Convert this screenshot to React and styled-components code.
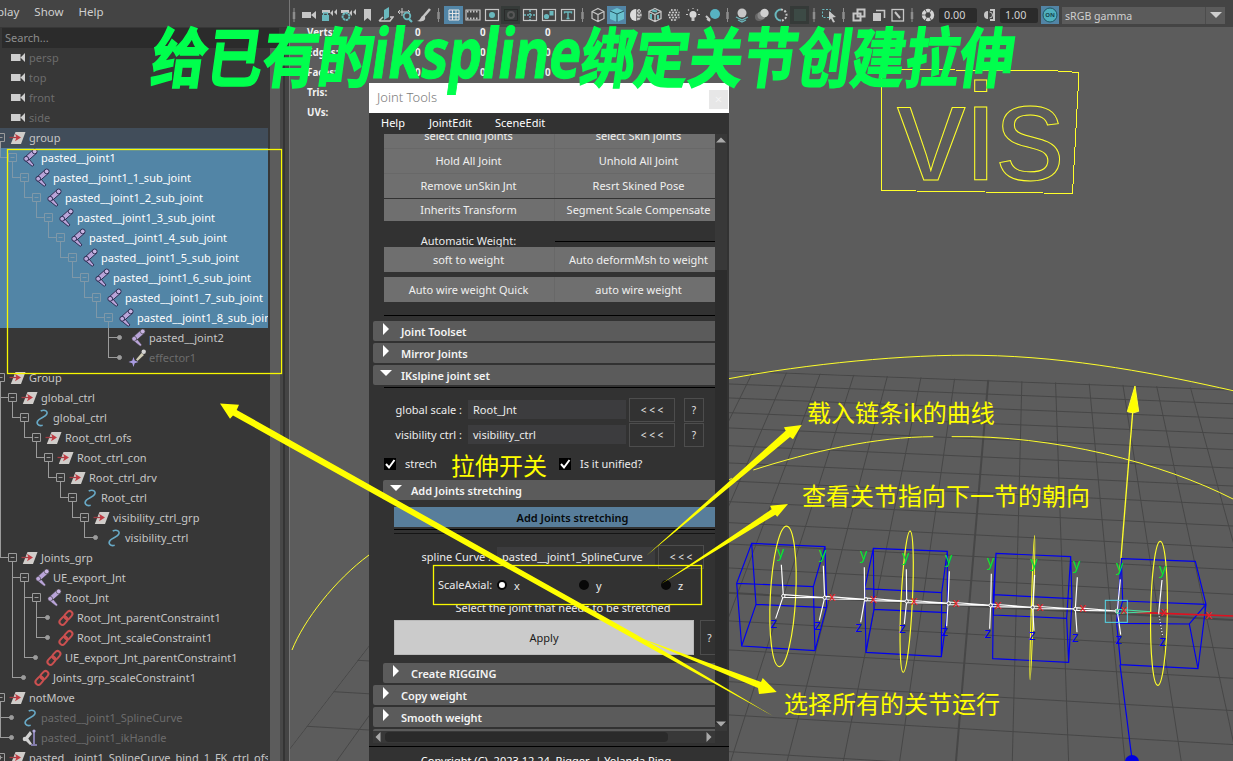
import React from 'react';
import styled, { createGlobalStyle } from 'styled-components';

const UI = '"Noto Sans", "Noto Sans CJK SC", sans-serif';
const CJK = '"Noto Sans CJK SC", "Noto Sans", sans-serif';

const Global = createGlobalStyle`
  * { box-sizing: border-box; }
  body { margin: 0; background: #373737; overflow: hidden; }
`;

const Screen = styled.main`
  position: relative;
  display: grid;
  grid-template-columns: 290px 943px;
  width: 1233px;
  height: 761px;
  overflow: hidden;
  font-family: ${UI};
  font-size: 11px;
  color: #c8c8c8;
`;

/* ---------- outliner ---------- */
const Outliner = styled.aside`
  display: flex;
  flex-direction: column;
  height: 761px;
  background: #373737;
  border-right: 1px solid #767676;
  overflow: hidden;
`;
const OutlinerMenu = styled.nav`
  display: flex;
  flex: none;
  height: 27px;
  margin-left: -3px;
  background: #444;
  line-height: 24px;
  gap: 15px;
  font-size: 11.5px;
  color: #cfcfcf;
`;
const SearchBar = styled.div`
  flex: none;
  height: 20px;
  margin: 1px 10px 0 2px;
  padding-left: 3px;
  background: #2b2b2b;
  line-height: 20px;
  color: #8d8d8d;
  font-size: 11px;
`;
const TreeArea = styled.div`
  display: flex;
  flex: 1;
`;
const Tree = styled.div`
  width: 268px;
  margin-right: 2px;
  overflow: hidden;
`;
const TreeScroll = styled.div`
  width: 10px;
  background: #5c5c5c;
`;
const PanelEdge = styled.div`
  flex: 1;
  background: linear-gradient(90deg, #474747 0 3px, #343434 3px 5px, #444 5px);
`;
const Row = styled.div`
  display: flex;
  height: 20px;
  line-height: 20px;
  white-space: nowrap;
  background: ${(p) => ({ sel: '#5285a6', parent: '#414d5a' }[p.$state] || 'transparent')};
  color: ${(p) => (p.$dim ? '#6c6c6c' : p.$state === 'sel' ? '#fff' : '#c6c6c6')};
  svg { flex: none; }
`;
const RowText = styled.span`
  margin-left: 2px;
  letter-spacing: 0.03px;
`;

const rows = [
  [0, 'persp', 'cam', 'dim'], [0, 'top', 'cam', 'dim'], [0, 'front', 'cam', 'dim'], [0, 'side', 'cam', 'dim'],
  [0, 'group', 'xf', 'parent'],
  [1, 'pasted__joint1', 'joint', 'sel'],
  [2, 'pasted__joint1_1_sub_joint', 'joint', 'sel'],
  [3, 'pasted__joint1_2_sub_joint', 'joint', 'sel'],
  [4, 'pasted__joint1_3_sub_joint', 'joint', 'sel'],
  [5, 'pasted__joint1_4_sub_joint', 'joint', 'sel'],
  [6, 'pasted__joint1_5_sub_joint', 'joint', 'sel'],
  [7, 'pasted__joint1_6_sub_joint', 'joint', 'sel'],
  [8, 'pasted__joint1_7_sub_joint', 'joint', 'sel'],
  [9, 'pasted__joint1_8_sub_joint', 'joint', 'sel'],
  [10, 'pasted__joint2', 'joint'],
  [10, 'effector1', 'eff', 'dim'],
  [0, 'Group', 'xf'], [1, 'global_ctrl', 'xf'], [2, 'global_ctrl', 'curve'],
  [3, 'Root_ctrl_ofs', 'xf'], [4, 'Root_ctrl_con', 'xf'], [5, 'Root_ctrl_drv', 'xf'],
  [6, 'Root_ctrl', 'curve'], [7, 'visibility_ctrl_grp', 'xf'], [8, 'visibility_ctrl', 'curve'],
  [1, 'Joints_grp', 'xf'], [2, 'UE_export_Jnt', 'joint'], [3, 'Root_Jnt', 'joint'],
  [4, 'Root_Jnt_parentConstraint1', 'link'], [4, 'Root_Jnt_scaleConstraint1', 'link'],
  [3, 'UE_export_Jnt_parentConstraint1', 'link'], [2, 'Joints_grp_scaleConstraint1', 'link'],
  [0, 'notMove', 'xf'], [1, 'pasted__joint1_SplineCurve', 'curve', 'dim'], [1, 'pasted__joint1_ikHandle', 'ik', 'dim'],
  [0, 'pasted__joint1_SplineCurve_bind_1_FK_ctrl_ofs', 'xf', 'plus'],
];

function hasLaterSibling(i, level) {
  for (let j = i + 1; j < rows.length; j++) {
    if (rows[j][0] < level) return false;
    if (rows[j][0] === level) return true;
  }
  return false;
}

function Branches({ index }) {
  const [d, , icon, state] = rows[index];
  const x = (l) => 12 * l + 0.5;
  const line = state === 'sel' ? '#7f98a8' : '#9b9b9b';
  const hasKids = index + 1 < rows.length && rows[index + 1][0] > d;
  const box = hasKids || state === 'plus';
  const paths = [];
  for (let l = 1; l < d; l++) if (hasLaterSibling(index, l)) paths.push(`M${x(l - 1)} 0V20`);
  if (d > 0) {
    paths.push(`M${x(d - 1)} 0V${hasLaterSibling(index, d) ? 20 : 10}`);
    paths.push(`M${x(d - 1)} 9.5H${box ? x(d) - 4 : x(d) - 2}`);
  }
  if (hasKids) paths.push(`M${x(d)} 14V20`);
  return (
    <svg width={10 + 12 * d} height="20" fill="none" stroke={line}>
      <path d={paths.join('')} />
      {box && <path d={`M${x(d) - 4} 5.5h8v8h-8zM${x(d) - 2} 9.5h4`} />}
      {state === 'plus' && <path d={`M${x(d)} 7.5v4`} />}
      {!box && d > 0 && icon !== 'cam' && <circle cx={x(d) - 1} cy="9.5" r="2" fill={line} />}
    </svg>
  );
}

function NodeIcon({ kind, selected }) {
  const edge = selected ? '#2f2f55' : '#373737';
  return (
    <svg width="17" height="20" viewBox="0 0 17 20" fill="none" overflow="visible">
      {kind === 'cam' && <path fill="#cdcdcd" d="M1 6h9.500v7H1zM10.500 9.500L15 5v9z" />}
      {kind === 'xf' && (
        <>
          <path fill="#d0cdca" d="M5.500 4H15.500L11 16H.8z" />
          <path d="M-.5 9.500H8" stroke="#a33e44" strokeWidth="1.300" />
          <path fill="#c23a42" d="M5 5.800L11 9.500 5 13.200 6.500 9.500z" />
        </>
      )}
      {kind === 'joint' && (
        <g stroke={edge} strokeWidth={selected ? 1 : 0.6}>
          <path fill="#b9a4d8" d="M10.200 2.600L15 4.800 6.800 12 2.800 9.200zM3 12.500l4-1.500 5 6-1.800 1.300z" />
          <circle cx="12.700" cy="3.400" r="2.400" fill="#c9b4e2" />
          <circle cx="4.200" cy="10.800" r="2.400" fill="#bfa9dc" />
        </g>
      )}
      {kind === 'eff' && (
        <>
          <path fill="#cfcbb4" d="M11.500 5l2.500 2L7.500 13l-1.500-1.500z" />
          <circle cx="13.700" cy="3.800" r="2.200" fill="#d5d5d5" />
          <path fill="#a99be0" d="M3.500 9l1.200 3.600L8.500 14l-3.800 1.300L3.500 19l-1.200-3.700L-1.500 14l3.800-1.400z" />
        </>
      )}
      {kind === 'curve' && <path d="M6.700 3C11 1 14.500 3.500 12.500 6.500C11 9 7 9.500 4.500 12C1.500 15 4 18.500 8.700 17.300" stroke="#68a9c6" strokeWidth="1.600" />}
      {kind === 'link' && (
        <g stroke="#cb5050" strokeWidth="2" transform="rotate(-48 8 10)">
          <rect x="-.2" y="7" width="9" height="5.800" rx="2.900" />
          <rect x="7.200" y="7" width="9" height="5.800" rx="2.900" />
        </g>
      )}
      {kind === 'ik' && (
        <>
          <path fill="#d2d2d2" d="M8 3l2 3-5 6-2.500-2zM3 12l3-2 4 6-2 1z" />
          <circle cx="3" cy="11" r="2.300" fill="#d2d2d2" />
          <path d="M12 3v13M9 17h6" stroke="#9c92cf" strokeWidth="1.600" />
          <circle cx="12" cy="3" r="1.600" fill="#b4abdd" />
        </>
      )}
    </svg>
  );
}

/* ---------- viewport ---------- */
const Viewport = styled.section`
  display: flex;
  flex-direction: column;
  height: 761px;
  background: #5c5c5c;
`;
const Toolbar = styled.div`
  display: flex;
  align-items: center;
  flex: none;
  height: 27px;
  padding-top: 3px;
  background: #444;
`;
const Tool = styled.span`
  display: flex;
  align-items: center;
  justify-content: center;
  flex: none;
  width: ${(p) => p.$w}px;
  height: 18px;
  background: ${(p) => ({ on: '#5285a6', dark: '#353a38' }[p.$mode] || 'transparent')};
`;
const NumberBox = styled.span`
  width: 38px;
  height: 15px;
  margin: 0 1px;
  padding-left: 5px;
  border-radius: 2px;
  background: #2b2b2b;
  color: #d2d2d2;
  line-height: 14px;
  font-size: 10.8px;
`;
const OnButton = styled.span`
  display: flex;
  width: 18px;
  height: 18px;
  margin: 0 3px 0 2px;
  background: #5285a6;
`;
const ColorSpace = styled.span`
  display: flex;
  justify-content: space-between;
  width: 163px;
  height: 17px;
  padding-left: 3px;
  background: #5b5b5b;
  color: #cfcfcf;
  line-height: 18px;
  font-size: 10.600px;
`;
const DropArrow = styled.span`
  display: flex;
  align-items: center;
  justify-content: center;
  width: 20px;
  border-left: 1px solid #4c4c4c;
`;
const Stage = styled.div`
  position: relative;
  flex: 1;
`;
const Hud = styled.div`
  position: absolute;
  left: 17px;
  top: -4px;
  display: grid;
  grid-template-columns: 108px 65px 65px 20px;
  grid-auto-rows: 20px;
  line-height: 20px;
  font-size: 9.8px;
  font-weight: 700;
  color: #f2f2f2;
`;
const SceneSvg = styled.svg`
  display: block;
`;

const G = '#c6c6c6';
const T = '#69b8bd';
const icons = {
  sep: <path d="M8 1v14" stroke="#8d8d8d" strokeWidth="1" />,
  cam: <path fill={G} d="M1 5h9v6H1zM10 8l5-4v8l-5-4z" />,
  camlock: <><path fill={G} d="M1 3h8v3H1zM9 6l3-3v6zM13 5l3-3v6z" /><rect x="1" y="8" width="7" height="6" fill={T} /><path d="M2.500 8V6h4v2" stroke={T} strokeWidth="1.300" /></>,
  camgear: <><path fill={G} d="M1 3h8v3H1zM9 6l3-3v6zM13 5l3-3v6z" /><circle cx="6" cy="9.500" r="3.400" stroke={T} strokeWidth="2" strokeDasharray="2.500 .5" /></>,
  mark: <path fill={G} d="M5 2h7v12l-3.500-3L5 14z" />,
  plane: <><path fill={T} d="M6 3l5-3v10l-5 3z" /><path d="M1 14h11l3-4h-3M5 10l-4 4" stroke={G} strokeWidth="1.500" /></>,
  pan: <><path d="M1 5h12M5 1v8M3 3L1 5l2 2M11 3l2 2" stroke={G} /><circle cx="10" cy="9" r="3.300" stroke={T} strokeWidth="1.800" /><path d="M12 12l3 3" stroke={T} strokeWidth="2.200" /></>,
  pencil: <><path d="M14 2L7.500 9.500" stroke={G} strokeWidth="2.600" /><path d="M8 9c-4-1-2 4-7 5 6 1.500 9-1 8-4z" fill={G} /></>,
  grid: <path d="M3 3h10v10H3zM6.500 3v10M10 3v10M3 6.500h10M3 10h10" stroke="#e4e4e4" />,
  film: <><path d="M1 3h14v10H1z" stroke={G} strokeWidth="1.200" /><path d="M2 4.500h12M2 11.500h12" stroke={G} strokeWidth="2" strokeDasharray="1.500 1.500" /></>,
  res: <><rect x="1.500" y="2.500" width="13" height="11" stroke={G} strokeWidth="1.200" /><circle cx="8" cy="8" r="3" fill={T} /></>,
  mask: <><rect x="1.500" y="2.500" width="13" height="11" stroke="#2a2a2a" /><circle cx="8" cy="8" r="3" stroke="#565656" strokeWidth="2" /></>,
  chart: <><rect x="1.500" y="2.500" width="13" height="11" stroke={G} strokeWidth="1.200" /><path d="M2 8h12M8 3v10" stroke={T} strokeWidth="1.500" strokeDasharray="2 1" /></>,
  safe: <><rect x="1.500" y="2.500" width="13" height="11" stroke={G} strokeWidth="1.200" /><circle cx="5.500" cy="9.500" r="2.600" fill={T} /><rect x="8.500" y="4" width="4" height="4.500" fill={T} /></>,
  title: <><rect x="1.500" y="2.500" width="13" height="11" stroke={G} strokeWidth="1.200" /><path d="M4.500 6.500V5h7v1.500M8 5v6.500M6.500 11.500h3" stroke={T} strokeWidth="1.400" /></>,
  cube: <path d="M8 1.500l6 3v7l-6 3-6-3v-7zM2 4.500l6 3 6-3M8 7.500v7" stroke={G} strokeWidth="1.200" />,
  solid: <><path fill="#69c1cf" d="M8 1l7 3v8l-7 3-7-3V4z" /><path d="M1 4l7 3 7-3M8 7v8" stroke="#24545f" /></>,
  half: <><circle cx="8" cy="8" r="6" fill="#777" /><path fill="#ddd" d="M8 2a6 6 0 000 12z" /><path d="M9 4h4M9 8h5M9 12h3M11 2v12" stroke="#d5d5d5" strokeWidth="1.500" strokeDasharray="1.500 1.500" /></>,
  texcube: <><path d="M8 1.500l6 3v7l-6 3-6-3v-7zM2 4.500l6 3 6-3M8 7.500v7" stroke={G} strokeWidth="1.300" /><path d="M4 7v5M11 8v4M5 3.500l5 1" stroke={T} strokeWidth="2" /></>,
  checker: <><circle cx="8" cy="8" r="6" fill="#555" /><path d="M5 3h7M3 5.500h10.500M2 8h12M3 10.500h10.500M5 13h6" stroke="#dcdcdc" strokeWidth="1.500" strokeDasharray="1.600 1.600" /></>,
  light: <><circle cx="8" cy="7.500" r="3.500" fill="#d8d8d8" /><path d="M6.500 11h3v3h-3z" fill={G} /><path d="M8 1v1M1 7.500h2M13 7.500h2M3 2.500l1 1M13 2.500l-1 1" stroke={G} strokeWidth="1.200" /></>,
  shadow: <><circle cx="10" cy="7" r="5" fill="#57b3c2" /><path d="M1 9l4 4M2 12l3 2" stroke={G} strokeWidth="2" /></>,
  ao: <><circle cx="8" cy="6" r="4.500" fill={G} /><path d="M2 10l6 3 6-3M4 13l4 2 4-2" stroke={T} strokeWidth="1.300" /></>,
  blur: <><circle cx="5" cy="10" r="4" fill="#666" /><circle cx="7.500" cy="8.500" r="4" fill="#888" /><circle cx="10.500" cy="6" r="4.200" fill="#d0d0d0" /></>,
  aa: <><path d="M8 2.500a5.500 5.500 0 000 11" stroke={T} strokeWidth="2" /><path d="M8 2.500a5.500 5.500 0 010 11" stroke={G} strokeWidth="2" strokeDasharray="2 1.500" /></>,
  dof: <rect x="2" y="2" width="12" height="12" fill="#3c4a45" />,
  pick: <><rect x="1.500" y="2.500" width="8" height="8" stroke={T} strokeDasharray="2 1.500" /><path fill={G} d="M8 4l7 6-3.500.500L14 15l-2 .500-2-4-2 2z" /></>,
  iso: <path d="M6.500 2.500h7v7h-7zM2.500 6.500h7v7h-7z" stroke={G} strokeWidth="2" />,
  iso2: <><path fill={G} d="M2 6h8v8H2z" /><path d="M5 3.500h8.500V11" stroke={G} strokeWidth="1.600" /></>,
  xray: <><rect x="2" y="2.500" width="11.500" height="11.500" stroke={G} strokeWidth="1.300" /><path d="M5 5l5 6" stroke={G} strokeWidth="2" /></>,
  aperture: <circle cx="8" cy="8" r="4.500" stroke="#d4d4d4" strokeWidth="3.500" strokeDasharray="4 .7" />,
  contrast: <><path d="M9 3h4v10H9" stroke={G} strokeWidth="2" /><path fill={G} d="M7 4a4 4 0 000 8z" /><path d="M8.500 5a3 3 0 010 6" stroke={G} /></>,
};
const toolItems = [
  ['sep', 8], ['cam', 21], ['camlock', 19], ['camgear', 19], ['mark', 19], ['plane', 19], ['pan', 19], ['pencil', 19],
  ['sep', 11], ['grid', 19, 'on'], ['film', 19], ['res', 19], ['mask', 19, 'dark'], ['chart', 19], ['safe', 19], ['title', 19],
  ['sep', 11], ['cube', 19], ['solid', 19, 'on'], ['half', 19], ['texcube', 19], ['checker', 19], ['light', 19], ['shadow', 21],
  ['sep', 9], ['ao', 20], ['blur', 20], ['aa', 18], ['dof', 19, 'dark'], ['sep', 10], ['pick', 20], ['sep', 9],
  ['iso', 21], ['iso2', 19], ['xray', 19], ['sep', 10], ['aperture', 21],
];
function ToolIcon({ name, w, mode }) {
  return (
    <Tool $w={w} $mode={mode}>
      <svg width={Math.min(w, 16)} height="16" viewBox={w < 16 ? `${8 - w / 2} 0 ${w} 16` : '0 0 16 16'} fill="none">
        {icons[name]}
        {name === 'sep' && <path d="M8 5v7" stroke="#8d8d8d" strokeWidth="2.500" />}
      </svg>
    </Tool>
  );
}

/* ground grid: columns run away from the viewer, rows run across */
const columns = Array.from({ length: 19 }, (_, i) => i - 12);
const rowStarts = [371, 384, 398, 412.7, 428, 445.7, 463, 481, 501.7, 522.7, 544, 568, 593, 621, 650, 681.7, 715, 751.7];

const bones = [
  [190, 768], [314, 773], [438, 778], [560, 784], [686, 790], [812, 796], [938, 802], [1066, 807], [1190, 813],
];
const yAxes = [
  [182, 640, 190], [308, 643, 314], [431, 648, 434], [557, 654, 560], [686, 660, 684], [812, 667, 812], [942, 671, 938], [1070, 678, 1066], [1199, 684, 1192], [1328, 691, 1324],
];
const zAxes = [
  [161, 852], [292, 857], [416, 863], [547, 868], [674, 875], [803, 882], [936, 888], [1065, 893], [1196, 900], [1328, 906],
];

function Scene() {
  return (
    <SceneSvg width="943" height="734" viewBox="290 27 943 734" fill="none">
      <clipPath id="ground"><path d="M585 365L1233 389V761H280z" /></clipPath>
      <g stroke="#474747" clipPath="url(#ground)">
        {columns.map((n) => (
          <path key={n} d={`M${988.3 + 33.6 * n} ${379 + 1.1 * n}L${956 + 56.3 * n} 761`} strokeWidth={n === 0 ? 2 : 1} />
        ))}
        {rowStarts.map((y, i) => {
          const s = 0.038 + i * 0.0013;
          return <path key={y} d={`M290 ${y - 440 * s}L1233 ${y + 503 * s}`} strokeWidth={i === 12 ? 2 : 1} />;
        })}
      </g>
      <g stroke="#ffff2a">
        <path shapeRendering="crispEdges" d="M881.500 68L903 69.500L1058 71L1079 72.500L1072.500 193.500L985 192L881.500 190.500z" />
        <path d="M292 650C304 620 335 580 369 555" />
        <text x="897" y="180" fontFamily='"Liberation Sans", sans-serif' fontSize="137">vis</text>
        <g transform="translate(720 340) scale(.33333)" strokeWidth="3">
          <path d="M27 116C260 72 560 42 780 46C1060 50 1330 105 1539 152" />
          <path d="M27 420L35 415M100 390C270 335 470 290 640 290M695 290C1000 284 1330 370 1539 477" />
          <path d="M1238 217L1200 690" strokeWidth="4" />
          <path fill="#ffff00" d="M1245 138L1256 214Q1240 222 1222 215z" />
        </g>
      </g>
      <g transform="translate(720 340) scale(.33333)" strokeWidth="3">
        <g stroke="#0000f0" strokeWidth="3.500">
          <path d="M95 610L315 620L320 800L285 932L65 918L50 730zM50 730L280 740L315 620M280 740L285 932M95 610L108 793L320 803M108 793L65 918" />
          <path d="M460 625L682 634L682 818L664 950L438 937L434 746zM434 746L665 758L682 634M665 758L664 950M460 625L462 808L682 818M462 808L438 937" />
          <path d="M828 640L1052 650L1056 780L1046 967L818 956L820 764zM820 764L1056 776M1052 650L1040 835L1046 967M828 640L820 825L1040 835" />
          <path d="M1204 656L1426 664L1458 793L1434 986L1202 974L1190 850zM1208 783L1458 793M1204 656L1208 783L1190 850L1408 852L1434 986M1408 852L1458 793" />
          <path d="M1200 974L1235 1250" />
        </g>
        <circle cx="1236" cy="1266" r="21" fill="#0000e0" />
        <g stroke="#ffff2a" strokeWidth="3.500">
          <ellipse cx="189" cy="769" rx="38" ry="211" transform="rotate(3 189 769)" />
          <ellipse cx="560" cy="785" rx="17" ry="212" transform="rotate(2.800 560 785)" />
          <ellipse cx="937" cy="803" rx="3" ry="216" transform="rotate(1.800 937 803)" />
          <ellipse cx="1317" cy="820" rx="25" ry="216" transform="rotate(1 1317 820)" />
        </g>
        <path stroke="#e01020" strokeWidth="5" d="M1250 817L1539 828" />
        <g stroke="#fff" strokeWidth="3.500">
          {yAxes.slice(0, 9).map(([x, y, bx], i) => (
            <path key={x} d={`M${x + 2} ${y + 34}L${bx} ${bones[i][1]}L${zAxes[i][0] + 6} ${zAxes[i][1] - 16}`} />
          ))}
          <path d="M1326 720L1316 820" />
          <path d="M1316 820L1328 890" strokeDasharray="3 6" />
          {bones.slice(0, 8).map(([x, y], i) => (
            <path key={x} d={`M${x} ${y - 4}L${bones[i + 1][0]} ${bones[i + 1][1]}L${x} ${y + 4}z`} />
          ))}
          {bones.map(([x, y]) => <circle key={x} cx={x} cy={y} r="5" fill="#5c5c5c" strokeWidth="3" />)}
        </g>
        <path d="M1190 808L1290 815L1190 820z" stroke="#46e0a0" />
        <rect x="1156" y="781" width="66" height="66" stroke="#55d7e8" />
        <g fontFamily={UI} fontSize="43" textAnchor="middle">
          <g fill="#00e62e">{yAxes.map(([x, y]) => <text key={x} x={x} y={y + 10}>y</text>)}</g>
          <g fill="#0000f0">{zAxes.map(([x, y]) => <text key={x} x={x} y={y + 12}>z</text>)}</g>
          <g fill="#e81c24" fontSize="40">
            {bones.slice(1).map(([x, y]) => <text key={x} x={x + 22} y={y + 10}>x</text>)}
            <text x="1332" y="829">x</text>
            <text x="1466" y="836">x</text>
          </g>
        </g>
      </g>
    </SceneSvg>
  );
}

/* ---------- joint tools window ---------- */
const ToolWindow = styled.section`
  position: absolute;
  left: 369px;
  top: 83px;
  width: 360px;
  height: 678px;
  overflow: hidden;
  background: #323232;
  color: #ececec;
  font-size: 11px;
`;
const TitleBar = styled.header`
  display: flex;
  justify-content: space-between;
  height: 30px;
  padding: 0 1px 0 8px;
  background: #fff;
  color: #7c7c7c;
  font-size: 13px;
  font-weight: 300;
  line-height: 29px;
`;
const CloseBox = styled.span`
  width: 19px;
  height: 19px;
  margin-top: 7px;
  background: #e7e7e7;
  color: #f7f7f7;
  line-height: 18px;
  text-align: center;
`;
const WindowMenu = styled.nav`
  display: grid;
  grid-template-columns: 48px 66px 80px;
  height: 21px;
  padding-left: 12px;
  line-height: 20px;
  font-size: 11px;
  color: #fff;
`;
const ScrollArea = styled.div`
  display: flex;
  height: 597px;
  overflow: hidden;
`;
const Content = styled.div`
  width: 346px;
  height: 597px;
  overflow: hidden;
`;
const VScroll = styled.div`
  display: flex;
  flex-direction: column;
  justify-content: space-between;
  align-items: center;
  width: 12px;
  padding: 1px 0 2px;
  background: linear-gradient(#383838 0 136px, #2c2c2c 136px 590px, #383838 590px);
`;
const ButtonGrid = styled.div`
  display: grid;
  grid-template-columns: 170px 160px;
  grid-auto-rows: ${(p) => p.$row || 24}px;
  gap: 1px;
  margin: ${(p) => p.$top || 0}px 0 0 15px;
  background: #686868;
`;
const GridButton = styled.button`
  padding: 0 ${(p) => (p.$right ? 0 : 1)}px ${(p) => p.$lift || 0}px ${(p) => (p.$right ? 7 : 0)}px;
  border: 0;
  background: #6f6f6f;
  color: #f0f0f0;
  font: inherit;
  white-space: nowrap;
`;
const Rule = styled.hr`
  height: 1px;
  margin: ${(p) => p.$top}px 0 0 ${(p) => p.$left || 15}px;
  border: 0;
  background: ${(p) => p.$color || '#000'};
`;
const SectionLabel = styled.div`
  display: grid;
  grid-template-columns: 169px 1fr;
  align-items: center;
  height: 26px;
  margin-left: 17px;
  padding-top: 13px;
  text-indent: -4px;
  text-align: center;
  line-height: 14px;
`;
const SectionRule = styled(Rule)`
  margin-left: 0;
`;
const Fold = styled.div`
  display: flex;
  align-items: center;
  height: 20px;
  margin: ${(p) => p.$top}px 0 0 ${(p) => (p.$nested ? 14 : 4)}px;
  border-radius: 2px 0 0 2px;
  background: #5b5b5b;
  color: #f4f4f4;
  font-size: 11px;
  font-weight: 600;
  letter-spacing: -0.05px;
  svg { margin: -4px 9px 0 7px; }
`;
const FieldRow = styled.div`
  display: flex;
  align-items: center;
  height: 25px;
  margin-top: ${(p) => p.$top || 0}px;
`;
const FieldLabel = styled.label`
  width: ${(p) => p.$w}px;
  padding-right: 6px;
  text-align: right;
  white-space: pre;
`;
const Field = styled.span`
  width: 158px;
  height: 19px;
  padding-left: 5px;
  background: #3c3c3e;
  line-height: 19px;
  white-space: nowrap;
`;
const OutlineButton = styled.button`
  flex: none;
  width: ${(p) => p.$w}px;
  height: ${(p) => p.$h || 24}px;
  margin-left: ${(p) => p.$left}px;
  padding: 0 ${(p) => p.$clip || 0}px 0 0;
  border: 1px solid #4d4d4d;
  background: transparent;
  color: #e6e6e6;
  font: inherit;
  font-size: 10px;
  white-space: pre;
`;
const CheckRow = styled.div`
  display: flex;
  align-items: center;
  height: 33px;
  padding-left: 16px;
`;
const Check = styled.span`
  display: flex;
  width: 12px;
  height: 12px;
  margin: 0 ${(p) => p.$gap}px 0 -1px;
  background: #000;
`;
const CheckLabel = styled.span`
  width: ${(p) => p.$w}px;
`;
const BlueButton = styled.button`
  display: block;
  width: 321px;
  height: 20px;
  margin: 7px 0 0 25px;
  padding: 0 0 0 36px;
  border: 0;
  background: #587e9b;
  color: #06090c;
  font: inherit;
  font-size: 11px;
  font-weight: 600;
`;
const RadioRow = styled.div`
  display: grid;
  grid-template-columns: 59px 82px 82px 40px;
  align-items: center;
  height: 31px;
  padding-left: 69px;
`;
const Radio = styled.span`
  display: flex;
  align-items: center;
  gap: 7px;
  &::before {
    content: '';
    box-sizing: border-box;
    width: 10px;
    height: 10px;
    border: ${(p) => (p.$on ? '2px' : '5px')} solid #080808;
    border-radius: 50%;
    background: #fff;
  }
`;
const RadioText = styled.span`
  padding-top: 2px;
`;
const RadioTitle = styled.span`
  padding-bottom: 1px;
`;
const Hint = styled.p`
  height: 15px;
  margin: 0 0 0 42px;
  line-height: 15px;
  text-align: center;
`;
const ApplyRow = styled.div`
  display: flex;
  margin: 5px 0 0 25px;
`;
const ApplyButton = styled.button`
  flex: none;
  width: 300px;
  height: 35px;
  border: 1px solid #b9b9b9;
  background: #cbcbcb;
  color: #1a1a1a;
  font: inherit;
`;
const HScroll = styled.div`
  display: flex;
  align-items: center;
  justify-content: space-between;
  width: 342px;
  height: 12px;
  margin-left: 4px;
  padding: 0 1px 0 0;
  background: #383838;
`;
const HThumb = styled.span`
  width: 283px;
  height: 10px;
  margin: 0 auto 0 2px;
  border-radius: 4px;
  background: #2a2a2a;
`;
const Copyright = styled.footer`
  margin-top: 3px;
  padding: 6px 6px 0 0;
  border-top: 1px solid #000;
  text-align: center;
  line-height: 16px;
  white-space: pre;
  color: #fff;
`;

const Tri = ({ dir, c = '#fff', w = 12, h = 12 }) => (
  <svg width={w} height={h} viewBox="0 0 12 12">
    <path fill={c} d={{ r: 'M3 0l6 6-6 6z', l: 'M9 0L3 6l6 6z', d: 'M0 3h12L6 9z', u: 'M0 9h12L6 3z' }[dir]} />
  </svg>
);
const Header = ({ open, children, ...p }) => <Fold {...p}><Tri dir={open ? 'd' : 'r'} />{children}</Fold>;
const CheckMark = ({ gap }) => (
  <Check $gap={gap}>
    <svg width="12" height="12" fill="none"><path d="M2 6l3 3.500L10.500 2" stroke="#fff" strokeWidth="2" /></svg>
  </Check>
);

function JointTools() {
  return (
    <ToolWindow>
      <TitleBar>Joint Tools<CloseBox>×</CloseBox></TitleBar>
      <WindowMenu><span>Help</span><span>JointEdit</span><span>SceneEdit</span></WindowMenu>
      <ScrollArea>
        <Content>
          <ButtonGrid $top={-10}>
            {['select child joints', 'select Skin joints', 'Hold All Joint', 'Unhold All Joint', 'Remove unSkin Jnt', 'Resrt Skined Pose'].map((t, i) => (
              <GridButton key={t} $right={i % 2} $lift={2}>{t}</GridButton>
            ))}
          </ButtonGrid>
          <ButtonGrid $row={22} $top={1}>
            <GridButton $lift={2}>Inherits Transform</GridButton><GridButton $right $lift={2}>Segment Scale Compensate</GridButton>
          </ButtonGrid>
          <SectionLabel>Automatic Weight:<SectionRule $top={0} /></SectionLabel>
          <ButtonGrid $row={25}>
            <GridButton>soft to weight</GridButton><GridButton $right>Auto deformMsh to weight</GridButton>
          </ButtonGrid>
          <ButtonGrid $row={25} $top={5}>
            <GridButton>Auto wire weight Quick</GridButton><GridButton $right>auto wire weight</GridButton>
          </ButtonGrid>
          <Rule $top={13} />
          <Header $top={5}>Joint Toolset</Header>
          <Header $top={2}>Mirror Joints</Header>
          <Header $top={2} open>IKslpine joint set</Header>
          <Rule $top={2} />
          <FieldRow $top={9}>
            <FieldLabel $w={99}>global scale :</FieldLabel><Field>Root_Jnt</Field>
            <OutlineButton $w={46} $left={3}>{'< < <'}</OutlineButton><OutlineButton $w={20} $left={9}>?</OutlineButton>
          </FieldRow>
          <FieldRow>
            <FieldLabel $w={99}>visibility ctrl :</FieldLabel><Field>visibility_ctrl</Field>
            <OutlineButton $w={46} $left={3}>{'< < <'}</OutlineButton><OutlineButton $w={20} $left={9}>?</OutlineButton>
          </FieldRow>
          <CheckRow>
            <CheckMark gap={9} /><CheckLabel $w={155}>strech</CheckLabel>
            <CheckMark gap={9} /><CheckLabel $w={80}>Is it unified?</CheckLabel>
          </CheckRow>
          <Header $top={0} $nested open>Add Joints stretching</Header>
          <BlueButton>Add Joints stretching</BlueButton>
          <Rule $top={2} $left={25} />
          <Rule $top={3} $left={25} $color="#151515" />
          <FieldRow $top={10}>
            <FieldLabel $w={128}>spline Curve :</FieldLabel><Field>pasted__joint1_SplineCurve</Field>
            <OutlineButton $w={46} $left={3}>{'< < <'}</OutlineButton>
          </FieldRow>
          <RadioRow>
            <RadioTitle>ScaleAxial:</RadioTitle>
            <Radio $on><RadioText>x</RadioText></Radio>
            <Radio><RadioText>y</RadioText></Radio>
            <Radio><RadioText>z</RadioText></Radio>
          </RadioRow>
          <Hint>Select the joint that needs to be stretched</Hint>
          <ApplyRow><ApplyButton>Apply</ApplyButton><OutlineButton $w={20} $h={35} $left={6} $clip={1}>?</OutlineButton></ApplyRow>
          <Header $top={8} $nested>Create RIGGING</Header>
          <Header $top={2}>Copy weight</Header>
          <Header $top={2}>Smooth weight</Header>
          <Header $top={2} />
        </Content>
        <VScroll><Tri dir="u" c="#aaa" w={10} h={10} /><Tri dir="d" c="#aaa" w={10} h={10} /></VScroll>
      </ScrollArea>
      <HScroll><Tri dir="l" c="#aaa" w={10} h={10} /><HThumb /><Tri dir="r" c="#aaa" w={10} h={10} /></HScroll>
      <Copyright>{'Copyright (C)  2023.12.24  Rigger  | Yolanda Ping'}</Copyright>
    </ToolWindow>
  );
}

/* ---------- tutorial notes drawn over everything ---------- */
const Notes = styled.svg`
  position: absolute;
  left: 0;
  top: 0;
  pointer-events: none;
`;

function Annotations() {
  return (
    <Notes width="1233" height="761">
      <g fill="#00ff4d" stroke="#00ff4d" fontWeight="700" transform="translate(0 82) skewX(-8)" fontFamily={CJK}>
        <text x="149" y="0" fontSize="65" strokeWidth="1.600" textLength="222" lengthAdjust="spacingAndGlyphs">给已有的</text>
        <text x="369" y="-4" fontSize="69" strokeWidth="1" fontFamily={UI} textLength="209" lengthAdjust="spacingAndGlyphs">ikspline</text>
        <text x="578" y="0" fontSize="65" strokeWidth="1.600" textLength="433" lengthAdjust="spacingAndGlyphs">绑定关节创建拉伸</text>
      </g>
      <g fill="none" stroke="#f8f800" strokeWidth="1.300">
        <rect x="7.500" y="149.500" width="274" height="224" />
        <rect x="433.500" y="565.500" width="268" height="39" />
      </g>
      <g fill="#ffff00">
        <path d="M220 403.500L239 404.700L236.700 410L637 635L773 716L634 639L233 415.500L230 418.700z" />
        <path d="M635 636L761 682L762.700 678L776.700 692L759 694L758 688z" />
        <path d="M646 556L785.700 430.700L784 427.300L801.700 425L793 439.300L790 437z" />
        <path d="M661 584L771.700 509.300L770 505.700L788 504L777.300 516.700L775.300 514.700z" />
        <g fontFamily={CJK} fontSize="24">
          <text x="807" y="422">载入链条ik的曲线</text>
          <text x="802" y="505">查看关节指向下一节的朝向</text>
          <text x="784" y="713">选择所有的关节运行</text>
          <text x="451" y="475">拉伸开关</text>
        </g>
      </g>
    </Notes>
  );
}

export default function App() {
  return (
    <>
      <Global />
      <Screen>
        <Outliner>
          <OutlinerMenu><span>play</span><span>Show</span><span>Help</span></OutlinerMenu>
          <SearchBar>Search...</SearchBar>
          <TreeArea>
            <Tree>
              {rows.map(([d, name, icon, state], i) => (
                <Row key={i} $state={state} $dim={state === 'dim'}>
                  <Branches index={i} />
                  <NodeIcon kind={icon} selected={state === 'sel'} />
                  <RowText>{name}</RowText>
                </Row>
              ))}
            </Tree>
            <TreeScroll />
            <PanelEdge />
          </TreeArea>
        </Outliner>
        <Viewport>
          <Toolbar>
            {toolItems.map(([name, w, mode], i) => <ToolIcon key={i} name={name} w={w} mode={mode} />)}
            <NumberBox>0.00</NumberBox>
            <ToolIcon name="contrast" w={21} />
            <NumberBox>1.00</NumberBox>
            <OnButton>
              <svg width="18" height="18" fill="none">
                <circle cx="9" cy="9" r="7" fill="#4fb0bd" stroke="#1f5663" />
                <text x="9" y="11.200" fontSize="6" fontWeight="700" textAnchor="middle" fill="#164550" fontFamily={UI}>ON</text>
              </svg>
            </OnButton>
            <ColorSpace>sRGB gamma<DropArrow><Tri dir="d" c="#cfcfcf" w={12} h={12} /></DropArrow></ColorSpace>
          </Toolbar>
          <Stage>
            <Scene />
            <Hud>
              {['Verts:', 'Edges:', 'Faces:'].map((t) => (
                <React.Fragment key={t}><span>{t}</span><span>0</span><span>0</span><span>0</span></React.Fragment>
              ))}
              <span>Tris:</span><span /><span /><span />
              <span>UVs:</span>
            </Hud>
          </Stage>
        </Viewport>
        <JointTools />
        <Annotations />
      </Screen>
    </>
  );
}
